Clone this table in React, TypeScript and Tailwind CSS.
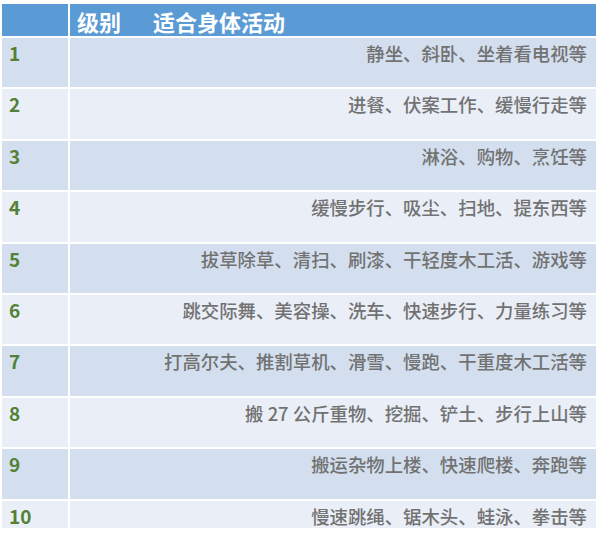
const ROWS: [string, string][] = [
  ["1", "静坐、斜卧、坐着看电视等"],
  ["2", "进餐、伏案工作、缓慢行走等"],
  ["3", "淋浴、购物、烹饪等"],
  ["4", "缓慢步行、吸尘、扫地、提东西等"],
  ["5", "拔草除草、清扫、刷漆、干轻度木工活、游戏等"],
  ["6", "跳交际舞、美容操、洗车、快速步行、力量练习等"],
  ["7", "打高尔夫、推割草机、滑雪、慢跑、干重度木工活等"],
  ["8", "搬 27 公斤重物、挖掘、铲土、步行上山等"],
  ["9", "搬运杂物上楼、快速爬楼、奔跑等"],
  ["10", "慢速跳绳、锯木头、蛙泳、拳击等"],
];

const FONT = "[font-family:'Noto_Sans_CJK_SC','Noto_Sans',sans-serif]";

export default function App() {
  return (
    <div className={`h-[537px] w-[600px] overflow-hidden bg-white pl-[2px] pt-[4px] ${FONT}`}>
      <div className="grid w-[594px] grid-cols-[66px_1fr] gap-[2px]">
        <div className="h-[32px] bg-[#5b9bd5]" />
        <div className="flex h-[32px] items-center bg-[#5b9bd5] pl-[7px] pt-[2px] text-[22px] font-bold leading-[28px] text-white">
          <span>级别</span>
          <span className="ml-[32px]">适合身体活动</span>
        </div>
        {ROWS.map(([n, text], i) => {
          const bg = i % 2 === 0 ? "bg-[#d3dfef]" : "bg-[#e9eef7]";
          const h = i === ROWS.length - 1 ? "h-[27px]" : "h-[49.4px]";
          return (
            <div key={n} className="contents">
              <div
                className={`${bg} ${h} pl-[7px] pt-[2px] text-[19px] font-semibold leading-[26px] text-[#538135]`}
              >
                {n}
              </div>
              <div
                className={`${bg} ${h} pr-[9px] pt-[2px] text-right text-[18.4px] font-medium leading-[26px] text-[#727272]`}
              >
                {text}
              </div>
            </div>
          );
        })}
      </div>
    </div>
  );
}
